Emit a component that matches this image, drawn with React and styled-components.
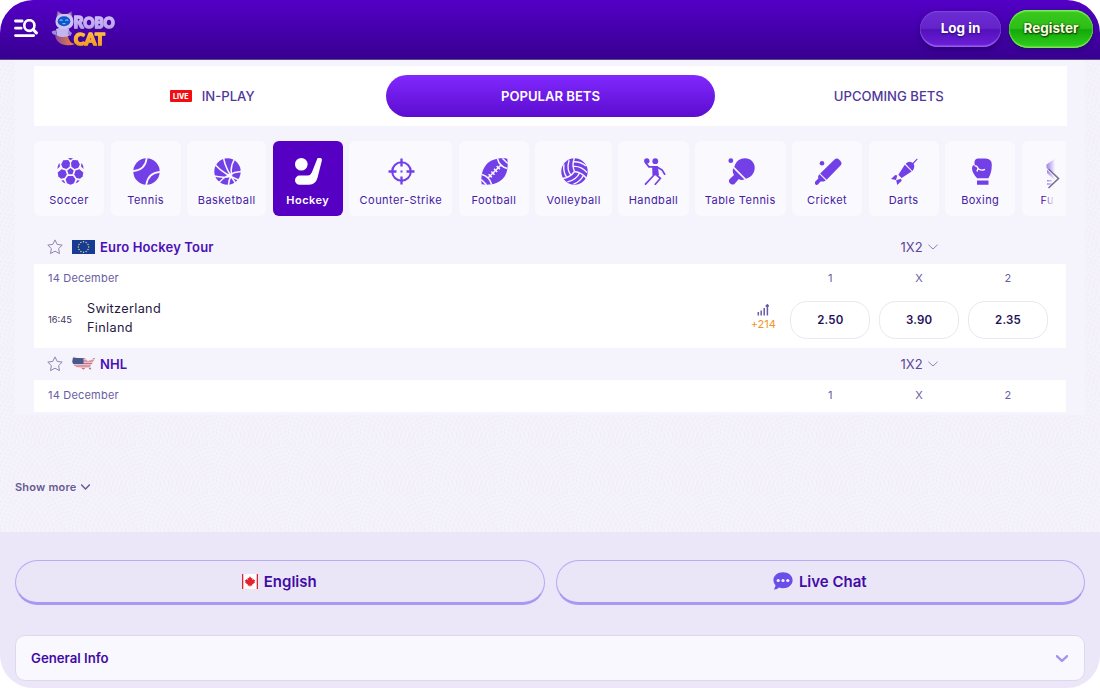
import React from 'react'
import styled, { createGlobalStyle, css } from 'styled-components'

const GlobalStyle = createGlobalStyle`
  * {
    box-sizing: border-box;
  }

  body {
    margin: 0;
    background: #fff;
    font-family: Inter, 'Liberation Sans', sans-serif;
    -webkit-font-smoothing: antialiased;
  }

  button {
    font-family: inherit;
    cursor: pointer;
  }
`

/* ---------- icons ---------- */

const GAP = '#faf9fe'

const SoccerIcon = () => (
  <svg width="27" height="27" viewBox="0 0 27 27" fill="currentColor">
    <path d="M13.5 10.1l3.2 2.4-1.2 3.8h-4l-1.2-3.8z" />
    <path d="M6.2 2.3L11.2 2l1.8 2.7-.4 4-3.2 2.2-3.7-1.2-1.5-3.3z" />
    <path d="M20.8 2.3L15.8 2 14 4.7l.4 4 3.2 2.2 3.7-1.2 1.5-3.3z" />
    <path d="M4.6 11.2l3.9 1.3 1.3 4-2.2 3.4-3.7.8-2.6-2.5-.6-3.6z" />
    <path d="M22.4 11.2l-3.9 1.3-1.3 4 2.2 3.4 3.7.8 2.6-2.5.6-3.6z" />
    <path d="M11 17.9h5l2.4 3.4-1.4 3.9-3.5 1.6-3.5-1.6-1.4-3.9z" />
    <path d="M10.9.4q2.6-.8 5.2 0l-2.6 1.5zM.8 8.3q.7-2.3 1.8-3.2l.3 3.5L.4 11zM26.2 8.3q-.7-2.3-1.8-3.2l-.3 3.5 2.5 2.4zM4.2 22.6l2.7-.4 1.4 3.4Q6 24.8 4.2 22.6zM22.8 22.6l-2.7-.4-1.4 3.4q2.3-.8 4.1-3z" />
  </svg>
)

const TennisIcon = () => (
  <svg width="27" height="27" viewBox="0 0 27 27">
    <circle cx="13.5" cy="13.5" r="13.2" fill="currentColor" />
    <path
      d="M-.5 13.2C8 12.6 13 7.6 13.8-.5M27.5 13.8C19 14.4 14 19.4 13.2 27.5"
      fill="none"
      stroke={GAP}
      strokeWidth="1.7"
    />
  </svg>
)

const BasketballIcon = () => (
  <svg width="27" height="27" viewBox="0 0 27 27">
    <circle cx="13.5" cy="13.5" r="13.2" fill="currentColor" />
    <path
      d="M1.500 7Q9 15.500 24.500 22M9.500 0Q11.500 11 21.500 25M20.500 1Q15.500 10 18 17.500M27 13.500Q14 14.500 5 24.500M0 18Q8 20 17 18.500M17.500 17.500Q14.500 22 14.500 27"
      fill="none"
      stroke={GAP}
      strokeWidth="1.500"
    />
  </svg>
)

const HockeyIcon = () => (
  <svg width="27" height="27" viewBox="0 0 27 27" fill="currentColor">
    <circle cx="6.3" cy="6.3" r="6.3" />
    <path d="M22 1.500a2.400 2.400 0 0 1 4.800 1.200L22.600 19.500Q20.800 26.300 14 26.800H4.600a4.500 4.500 0 0 1 0-9.200h8.200q2.800-.2 4-3.100z" />
  </svg>
)

const CrosshairIcon = () => (
  <svg width="27" height="27" viewBox="0 0 27 27" fill="none" stroke="currentColor">
    <circle cx="13.500" cy="13.500" r="9.300" strokeWidth="2.100" />
    <path d="M13.500.5V8.500M13.500 18.500v8M.5 13.500h8M18.500 13.500h8" strokeWidth="2.300" />
    <path d="M12.500 13.500h2" strokeWidth="2" />
  </svg>
)

const FootballIcon = () => (
  <svg width="27" height="27" viewBox="0 0 27 27">
    <path
      d="M26.300.7C17.500-.5 9.500 1.500 5 7 1.300 11.500-.5 18 .7 26.300 9 27.500 16.500 26 21.500 21 26 16.500 27.600 9 26.300.7z"
      fill="currentColor"
    />
    <path
      d="M7 20L20 7M7.600 16.200l3.200 3.200M10.300 13.500l3.200 3.200M13 10.800l3.200 3.200M15.700 8.100l3.200 3.200M16.500.8Q18.500 8.500 26.300 10.500M.8 16.500Q8.500 18.500 10.500 26.300M21.500.5l5.300 5M.3 21.500l5.200 5.300"
      fill="none"
      stroke={GAP}
      strokeWidth="1.500"
    />
  </svg>
)

const VolleyballIcon = () => (
  <svg width="27" height="27" viewBox="0 0 27 27">
    <circle cx="13.500" cy="13.500" r="13.200" fill="currentColor" />
    <g fill="none" stroke={GAP} strokeWidth="1.400">
      {[0, 120, 240].map(angle => (
        <path
          key={angle}
          transform={`rotate(${angle} 13.5 13.5)`}
          d="M13.500 13.500Q10.500 7 13.500-.5M12 8.500Q19.500 7.500 26 14.500M12.500 3.800Q19.500 3.500 25 8"
        />
      ))}
    </g>
  </svg>
)

const HandballIcon = () => (
  <svg width="27" height="27" viewBox="0 0 27 27">
    <g fill="currentColor">
      <circle cx="5.800" cy="3" r="2.700" />
      <circle cx="14.300" cy="3.200" r="2.900" />
      <path d="M11.300 8h5.500l1.200 9.500h-6z" />
    </g>
    <path
      d="M5 5.200l3 3.700h8l5 3 2.700 4.300M12.600 17.500l-8.100 8.700M16 17.500l3.500 2.800-5.200 6M12.300 9v8.500"
      fill="none"
      stroke="currentColor"
      strokeWidth="1.700"
      strokeLinecap="round"
      strokeLinejoin="round"
    />
  </svg>
)

const TableTennisIcon = () => (
  <svg width="27" height="27" viewBox="0 0 27 27" fill="currentColor">
    <circle cx="2.800" cy="2.700" r="2.400" />
    <path d="M6.300 9C8 3 12 .3 17 .3c5.500 0 9.700 4.200 9.700 9.500 0 5-3.200 9.500-8.700 11z" />
    <path d="M5.200 10.300L16.500 21.600q-3.500.9-5.700-.5L6.700 25.700a3.300 3.300 0 0 1-5-.6 3.200 3.200 0 0 1 .3-4.300L6 17q-2-3-.8-6.700z" />
  </svg>
)

const CricketIcon = () => (
  <svg width="27" height="27" viewBox="0 0 27 27" fill="currentColor">
    <circle cx="7" cy="5.300" r="2.300" />
    <path d="M19.500 1.400q2.500-2 5 .5l.8.800q2.200 2.500.2 4.800L11.700 21.800 5.200 15.400z" />
    <path d="M4.600 16.200l6.200 6.200-2 1.200-3.200-.2-2.500 2.900a1.900 1.900 0 0 1-2.800-2.700l3-3-.2-2.600z" />
  </svg>
)

const DartsIcon = () => (
  <svg width="27" height="27" viewBox="0 0 27 27" fill="currentColor">
    <path d="M21 5.500L26 .4l.7.800-4.800 5.200z" />
    <path d="M14.700 5.700q2.700-2.600 5.800-1.500 3 1.300 2.800 4.300-.2 2.900-2 4.500z" />
    <path d="M13.800 6.800l6.800 6.800-10 6.500-3.300-3.300z" />
    <path d="M6.300 17.500l-2-.6-4.300 4.200 5 .9zM10 20.800l.7 2L6.200 27l-1-4.700z" />
  </svg>
)

const BoxingIcon = () => (
  <svg width="27" height="27" viewBox="0 0 27 27">
    <path
      d="M9.500.4h8q6.300.2 6.300 6.300 0 8-3.400 13.600H9.200Q4.300 15 4 10.400q0-3.200 2.800-3.300Q5.300 1.500 9.500.4zM9 22.400h11.500v4.300H9z"
      fill="currentColor"
    />
    <path
      d="M6.500 7.600q3 .3 3.700 3.200 2.500 2.300 6.800.5M10.800 10.500q-2 .8-1.500 3.200"
      fill="none"
      stroke={GAP}
      strokeWidth="1.300"
    />
  </svg>
)

const SneakerIcon = () => (
  <svg width="27" height="27" viewBox="0 0 27 27" fill="currentColor">
    <path d="M9 .5L.5 6.500v3.500l6 5L14 9zM1 11.500l15 14-3 1-12-11.500zM1 22h5v1.500H1zM1 25.300h5v1.500H1z" />
  </svg>
)

const MenuSearchIcon = () => (
  <svg width="24" height="19" viewBox="0 0 25 19" fill="none" stroke="#fff" strokeLinecap="round" preserveAspectRatio="none">
    <path d="M1.500 2h7M1.500 9.200h6M1.500 16.600h19" strokeWidth="2.800" />
    <circle cx="16" cy="6.500" r="5.300" strokeWidth="2.800" />
    <path d="M20 10.500l3.300 3.400" strokeWidth="3.200" />
  </svg>
)

const StarIcon = () => (
  <svg width="16" height="16" viewBox="0 0 16 16" fill="none" stroke="#8f83b5">
    <path
      d="M8 .9l2.200 4.500 5 .7-3.600 3.500.9 5L8 12.200l-4.500 2.400.9-5L.8 6.100l5-.7z"
      strokeLinejoin="round"
    />
  </svg>
)

const ChevronDown = ({ width = 10, height = 6, color = '#8d85ad', weight = 1 }) => (
  <svg width={width} height={height} viewBox="0 0 10 6" fill="none" preserveAspectRatio="none">
    <path d="M.7 1L5 5l4.300-4" stroke={color} strokeWidth={weight} strokeLinecap="round" strokeLinejoin="round" />
  </svg>
)

const StatsIcon = () => (
  <svg width="12" height="12" viewBox="0 0 12 12" stroke="#695aa6" strokeWidth="1.500">
    <path d="M1.300 11.500V8M4.200 11.500V6.500M7.200 11.500V4M10.400 11.500V1M8.700 2.500L10.400.8 11.800 2.500" fill="none" />
  </svg>
)

const EuFlag = () => (
  <svg width="23" height="14" viewBox="0 0 23 14">
    <rect width="23" height="14" fill="#173a94" />
    {Array.from({ length: 12 }, (_, i) => (
      <circle
        key={i}
        cx={11.5 + 5.2 * Math.sin((i * Math.PI) / 6)}
        cy={7 - 5.2 * Math.cos((i * Math.PI) / 6)}
        r="0.75"
        fill="#d9d86a"
      />
    ))}
  </svg>
)

const UsFlag = () => (
  <svg width="23" height="14" viewBox="0 0 23 14">
    <clipPath id="usa">
      <path d="M1 .5Q6 1.300 12 1.200l2 .8 1.500 2 2.500-.5L20.500 2 22.300.7l.5 1.500-2 2.500-.8 2-1.800 2.300L19.500 13l-1.500.3-1.500-2.500-3.500.3-1.500 2.500-2-2.700L5 10.200 2 8.500.3 5z" />
    </clipPath>
    <g clipPath="url(#usa)">
      <rect width="23" height="14" fill="#e6c3cd" />
      <path d="M0 1.500h23M0 4h23M0 6.500h23M0 9h23M0 11.500h23" stroke="#c9707d" strokeWidth="1.200" />
      <rect width="11.500" height="7" fill="#45588f" />
    </g>
  </svg>
)

const CanadaFlag = () => (
  <svg width="16" height="15" viewBox="0 0 16 15">
    <rect width="16" height="15" fill="#fff" />
    <path d="M0 0h1.300v15H0zM14.700 0H16v15h-1.300z" fill="#e1232f" />
    <path
      d="M8 2.200l1.300 2 1.200-.5-.3 2.400 1.400-1 .4 1 1.200.2-.8 1.500.5.8-2.900 2.100.2 1-1.900-.2v1.600h-.6v-1.600l-1.900.2.2-1-2.900-2.100.5-.8-.8-1.500L4 6.100l.4-1 1.400 1-.3-2.400 1.200.5z"
      fill="#e1232f"
    />
  </svg>
)

const ChatIcon = () => (
  <svg width="20" height="18" viewBox="0 0 20 18">
    <path
      d="M10 .3c5.400 0 9.600 3.400 9.600 8s-4.200 8-9.600 8q-2.200 0-4-.7Q4 17.700.8 17.500 2.500 15.500 2.500 13.200.4 11 .4 8.300c0-4.600 4.200-8 9.600-8z"
      fill="#6b4de8"
    />
    <circle cx="5.200" cy="8.500" r="1.600" fill="#f3efff" />
    <circle cx="10" cy="8.500" r="1.600" fill="#f3efff" />
    <circle cx="14.800" cy="8.500" r="1.600" fill="#f3efff" />
  </svg>
)

const RoboCatLogo = () => (
  <svg width="66" height="38" viewBox="0 0 66 38">
    <defs>
      <linearGradient id="robo" x1="0" y1="0" x2="0" y2="1">
        <stop offset="0" stopColor="#d3c1fb" />
        <stop offset="1" stopColor="#b79af2" />
      </linearGradient>
      <linearGradient id="cat" x1="0" y1="0" x2="0" y2="1">
        <stop offset="0" stopColor="#ffc64a" />
        <stop offset="1" stopColor="#f3901c" />
      </linearGradient>
      <linearGradient id="tail" x1="0" y1="0" x2="1" y2="0">
        <stop offset="0" stopColor="#8d489c" />
        <stop offset="1" stopColor="#f08b2c" />
      </linearGradient>
      <filter id="edge" x="-10%" y="-10%" width="120%" height="130%">
        <feDropShadow dx="0" dy=".8" stdDeviation=".7" floodColor="#3b1458" />
      </filter>
    </defs>
    <path d="M4 24q0 9 10 11 6 1 10-1-6-1-7-8z" fill="url(#tail)" />
    <path d="M5 19q6-3 13 0l.5 6.500q-7 3-12.500 0z" fill="#c3b6ef" />
    <path d="M5 20.500q-4-.5-4.300 1.500.5 3 5 3zM17.500 20l3.500 3-1.500 3-3-2z" fill="#9c8cdc" />
    <path d="M5.500 8L6.500 1l5 3.200h4L20.500 1.500 21.500 9z" fill="#9b83c9" stroke="#5c3b96" strokeWidth=".6" />
    <path d="M8 3l2.500 1.500L7.500 6zM19 3.500L16.500 5l3 1.500z" fill="#d98bb0" />
    <rect x="4.500" y="4" width="18" height="15" rx="7" fill="#cfc3f3" />
    <ellipse cx="13" cy="11.200" rx="6.300" ry="5" fill="#1453c9" />
    <path d="M8.700 10.700q1.500-1.500 3 0M14.300 10.700q1.500-1.500 3 0M11.500 13.700h3" stroke="#4ec8ff" strokeWidth="1.200" fill="none" />
    <g fontFamily="Lato, sans-serif" fontWeight="900" strokeLinejoin="round" strokeWidth="1.500" filter="url(#edge)">
      <text x="22.500" y="18.200" fontSize="14.500" textLength="41" lengthAdjust="spacingAndGlyphs" fill="url(#robo)" stroke="url(#robo)">
        <tspan fontSize="16.500">R</tspan>
        OBO
      </text>
      <text x="23" y="35" fontSize="16.500" textLength="31" lengthAdjust="spacingAndGlyphs" fill="url(#cat)" stroke="url(#cat)">
        CAT
      </text>
    </g>
  </svg>
)

/* ---------- data ---------- */

const sports = [
  { name: 'Soccer', width: 70.2, icon: SoccerIcon },
  { name: 'Tennis', width: 70.2, icon: TennisIcon },
  { name: 'Basketball', width: 79, icon: BasketballIcon },
  { name: 'Hockey', width: 70.2, icon: HockeyIcon, active: true },
  { name: 'Counter-Strike', width: 103.2, icon: CrosshairIcon },
  { name: 'Football', width: 70.2, icon: FootballIcon },
  { name: 'Volleyball', width: 76.5, icon: VolleyballIcon },
  { name: 'Handball', width: 70.2, icon: HandballIcon },
  { name: 'Table Tennis', width: 90.5, icon: TableTennisIcon },
  { name: 'Cricket', width: 70.2, icon: CricketIcon },
  { name: 'Darts', width: 70.2, icon: DartsIcon },
  { name: 'Boxing', width: 70.2, icon: BoxingIcon },
  { name: 'Fu', width: 51, icon: SneakerIcon, shift: 24 },
]

const leagues = [
  {
    name: 'Euro Hockey Tour',
    flag: EuFlag,
    date: '14 December',
    headHeight: 34,
    match: { time: '16:45', home: 'Switzerland', away: 'Finland', more: '+214', odds: ['2.50', '3.90', '2.35'] },
  },
  { name: 'NHL', flag: UsFlag, date: '14 December', headHeight: 32 },
]

/* ---------- page ---------- */

const App = () => (
  <>
    <GlobalStyle />
    <Page>
      <Header>
        <MenuSearchIcon />
        <Brand>
          <RoboCatLogo />
        </Brand>
        <LoginButton>Log in</LoginButton>
        <RegisterButton>Register</RegisterButton>
      </Header>

      <Main>
        <Panel>
          <Tabs>
            <Tab>
              <LiveBadge>LIVE</LiveBadge>
              IN-PLAY
            </Tab>
            <Tab $active>POPULAR BETS</Tab>
            <Tab>UPCOMING BETS</Tab>
          </Tabs>

          <SportsBar>
            <SportsTrack>
              {sports.map(({ name, width, icon: Icon, active, shift }) => (
                <Sport key={name} $width={width} $active={active} $shift={shift}>
                  <Icon />
                  <SportName>{name}</SportName>
                </Sport>
              ))}
            </SportsTrack>
            <NextFade>
              <svg width="13" height="21" viewBox="0 0 13 21" fill="none" stroke="#77718f" strokeWidth="1.600">
                <path d="M1.500 1L11.500 10.500 1.500 20" />
              </svg>
            </NextFade>
          </SportsBar>

          {leagues.map(({ name, flag: Flag, date, headHeight, match }) => (
            <section key={name}>
              <LeagueHead $height={headHeight}>
                <StarIcon />
                <FlagBox>
                  <Flag />
                </FlagBox>
                <LeagueName>{name}</LeagueName>
                <Market>
                  1X2
                  <ChevronDown />
                </Market>
              </LeagueHead>
              <LeagueBody>
                <DateRow $tight={Boolean(match)}>
                  <span>{date}</span>
                  <OddsGrid>
                    <span>1</span>
                    <span>X</span>
                    <span>2</span>
                  </OddsGrid>
                </DateRow>
                {match && (
                  <MatchRow>
                    <Time>{match.time}</Time>
                    <Teams>
                      <span>{match.home}</span>
                      <span>{match.away}</span>
                    </Teams>
                    <MoreBets>
                      <StatsIcon />
                      {match.more}
                    </MoreBets>
                    <OddsGrid>
                      {match.odds.map(odd => (
                        <Odd key={odd}>{odd}</Odd>
                      ))}
                    </OddsGrid>
                  </MatchRow>
                )}
              </LeagueBody>
            </section>
          ))}
        </Panel>
        <ShowMore>
          Show more
          <ChevronDown width={9} height={6} color="#685b94" weight={1.7} />
        </ShowMore>
      </Main>

      <Footer>
        <FooterActions>
          <FooterButton>
            <CanadaFlag />
            English
          </FooterButton>
          <FooterButton>
            <ChatIcon />
            Live Chat
          </FooterButton>
        </FooterActions>
        <Accordion>
          General Info
          <ChevronDown width={12} height={7} color="#a594ef" weight={2} />
        </Accordion>
      </Footer>
    </Page>
  </>
)

const Page = styled.div`
  display: flex;
  flex-direction: column;
  width: 1100px;
  height: 688px;
  overflow: hidden;
  border-radius: 33px;
  background: #ebe6f8;
`

const Header = styled.header`
  display: flex;
  align-items: center;
  flex: none;
  height: 60px;
  padding: 0 7px 2px 14px;
  background: linear-gradient(#5300c6, #380091);
  border-bottom: 1px solid #5c4a8c;
`

const Brand = styled.div`
  display: flex;
  margin: 0 auto 0 13px;
`

const HeaderButton = styled.button`
  border: 0;
  border-radius: 20px;
  color: #fff;
  font-size: 13.5px;
  font-weight: 700;
  padding: 0 0 1px;
`

const LoginButton = styled(HeaderButton)`
  width: 81px;
  height: 36px;
  margin-right: 8px;
  background: linear-gradient(#6c2cd3 0%, #6424ca 48%, #5410bb 52%, #6d20dc 100%);
  box-shadow: inset 0 1px 1px #7c4bd8, inset 0 -1.5px 1px #9a60ea, 0 3px 6px rgba(25, 0, 90, 0.5);
  text-shadow: 0 1px 2px #2a0871;
`

const RegisterButton = styled(HeaderButton)`
  width: 84px;
  height: 38px;
  color: #f4ffd9;
  background: linear-gradient(#3cc91c 0%, #2dbe18 48%, #14a80b 52%, #30d01b 100%);
  box-shadow: inset 0 1.5px 1px #78ef55, inset 0 -1.5px 1px #7fe35a, inset 0 0 0 1px #27b817,
    0 2px 5px rgba(15, 20, 70, 0.5);
  text-shadow: 0 0 2px #174c12, 0 1px 2px #174c12, 1px 1px 1px #174c12;
`

const Main = styled.main`
  flex: none;
  height: 472px;
  padding: 0 15px;
  background-color: #f3f1f9;
  background-image: repeating-radial-gradient(circle at 0 100%, rgba(255, 255, 255, 0.22) 0 1px, transparent 1px 4px),
    repeating-radial-gradient(circle at 100% 100%, rgba(226, 221, 238, 0.16) 0 1px, transparent 1px 4px);
  background-size: 72px 48px;
`

const Panel = styled.div`
  height: 355px;
  padding: 6px 19px 0;
  background: #f5f3fb;
`

const Tabs = styled.nav`
  display: flex;
  height: 60px;
  padding: 9px;
  margin-right: -1px;
  background: #fff;
`

const Tab = styled.div`
  display: flex;
  flex: 1;
  align-items: center;
  justify-content: center;
  gap: 10px;
  margin: 0 5px;
  padding-bottom: 1px;
  color: #4f389a;
  font-size: 13.1px;
  font-weight: 500;

  ${({ $active }) =>
    $active &&
    css`
      border-radius: 21px;
      color: #fff;
      font-weight: 600;
      background: linear-gradient(#8128ff, #5c0dcf);
    `}
`

const LiveBadge = styled.span`
  width: 22px;
  height: 12px;
  border-radius: 1px;
  background: #f20d12;
  color: #fff;
  font-size: 7px;
  font-weight: 800;
  line-height: 13px;
  text-align: center;
`

const SportsBar = styled.div`
  position: relative;
  height: 75px;
  margin: 15px 0 14px;
  overflow: hidden;
`

const SportsTrack = styled.div`
  display: flex;
  gap: 6.43px;
`

const Sport = styled.div`
  display: flex;
  flex: none;
  flex-direction: column;
  align-items: center;
  width: ${({ $width }) => $width}px;
  height: 75px;
  padding-top: 17px;
  border-radius: 6px;
  color: ${({ $active }) => ($active ? '#fff' : '#7240e6')};
  background: ${({ $active }) => ($active ? '#5500c3' : '#faf9fe')};

  svg {
    flex: none;
    margin-left: ${({ $shift = 2 }) => $shift}px;
  }

  span {
    color: ${({ $active }) => ($active ? '#fff' : '#4520a4')};
    font-weight: ${({ $active }) => ($active ? 600 : 400)};
  }
`

const SportName = styled.span`
  margin-top: 8px;
  font-size: 11px;
  line-height: 14px;
  letter-spacing: 0.45px;
  white-space: nowrap;
`

const NextFade = styled.div`
  position: absolute;
  top: 0;
  right: 0;
  display: flex;
  align-items: center;
  justify-content: flex-end;
  width: 24px;
  height: 75px;
  padding: 0 6px 0 0;
  background: linear-gradient(90deg, rgba(250, 249, 254, 0), #faf9fe 55%);
`

const LeagueHead = styled.div`
  display: flex;
  align-items: center;
  height: ${({ $height }) => $height}px;
  padding: 0 13px;
`

const FlagBox = styled.span`
  display: flex;
  margin: 0 5px 0 9px;
`

const LeagueName = styled.h3`
  margin: 0 auto 0 0;
  color: #4a10b5;
  font-size: 13px;
  font-weight: 600;
  letter-spacing: 0.15px;
`

const Market = styled.div`
  display: flex;
  align-items: center;
  gap: 5px;
  width: 152.500px;
  color: #5a4899;
  font-size: 13px;
`

const LeagueBody = styled.div`
  padding: 0 18px 0 14px;
  background: #fff;
`

const DateRow = styled.div`
  display: flex;
  align-items: center;
  justify-content: space-between;
  height: 32px;
  padding-bottom: ${({ $tight }) => ($tight ? 5 : 3)}px;
  color: #6a5da5;
  font-size: 11px;
  letter-spacing: 0.2px;
`

const OddsGrid = styled.div`
  display: grid;
  grid-template-columns: repeat(3, 80px);
  column-gap: 8.8px;
  text-align: center;
`

const MatchRow = styled.div`
  display: flex;
  align-items: center;
  height: 52px;
  padding-bottom: 5px;
`

const Time = styled.span`
  width: 39px;
  color: #3d3660;
  font-size: 9.300px;
`

const Teams = styled.div`
  display: flex;
  flex-direction: column;
  margin: -3px auto 0 0;
  color: #1f1942;
  font-size: 12.700px;
  line-height: 19px;
  letter-spacing: 0.33px;
`

const MoreBets = styled.div`
  display: flex;
  flex-direction: column;
  align-items: center;
  margin: -3px 14.500px 0 0;
  color: #eb9629;
  font-size: 11px;
  line-height: 17px;
`

const Odd = styled.div`
  height: 38px;
  border: 1px solid #eae8f0;
  border-radius: 17px;
  color: #1e1259;
  font-size: 11.500px;
  font-weight: 600;
  line-height: 36px;
  letter-spacing: 0.2px;
`

const ShowMore = styled.div`
  display: flex;
  align-items: center;
  gap: 5px;
  margin-top: 65px;
  color: #685b94;
  font-size: 11px;
  font-weight: 600;
  line-height: 14px;
  letter-spacing: 0.2px;
`

const Footer = styled.footer`
  padding: 28px 15px 0;
`

const FooterActions = styled.div`
  display: grid;
  grid-template-columns: 1fr 1fr;
  gap: 11px;
`

const FooterButton = styled.button`
  display: flex;
  align-items: center;
  justify-content: center;
  gap: 6px;
  height: 45px;
  padding: 0 1px 1px 0;
  border: 1px solid #b9aaf3;
  border-bottom: 3px solid #a898f2;
  border-radius: 23px;
  background: #eae6f8;
  color: #420ba6;
  font-size: 15px;
  font-weight: 600;
`

const Accordion = styled.div`
  display: flex;
  align-items: center;
  justify-content: space-between;
  height: 46px;
  margin: 30px 0 0;
  padding: 0 16px 0 15px;
  border: 1px solid #ded8ee;
  border-radius: 10px;
  background: #f9f8fe;
  color: #420ba6;
  font-size: 13.200px;
  font-weight: 600;
`

export default App
